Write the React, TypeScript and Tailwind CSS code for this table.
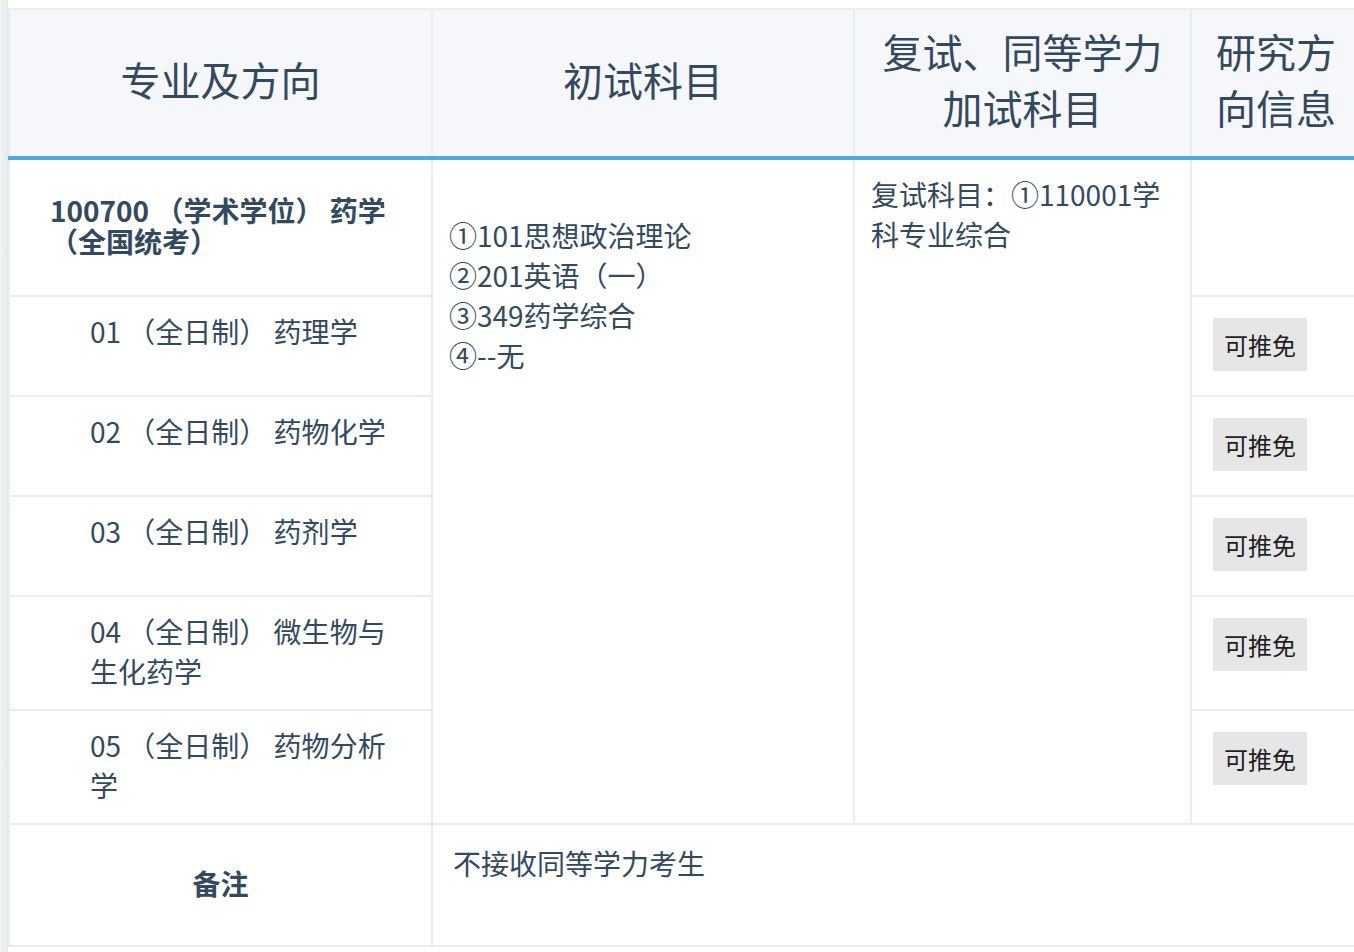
import React from "react";

const font = { fontFamily: '"Noto Sans CJK SC", "Noto Sans", sans-serif' };

const rows = [
  { text: ["01 （全日制） 药理学"], h: "h-[100px]" },
  { text: ["02 （全日制） 药物化学"], h: "h-[100px]" },
  { text: ["03 （全日制） 药剂学"], h: "h-[100px]" },
  { text: ["04 （全日制） 微生物与", "生化药学"], h: "h-[114px]" },
  { text: ["05 （全日制） 药物分析", "学"], h: "h-[114px]" },
];

function Tag() {
  return (
    <span className="inline-block bg-[#e6e6e6] px-[11px] text-[24px] leading-[53px] text-[#1f1f1f]">
      可推免
    </span>
  );
}

export default function App() {
  const th =
    "border-2 border-[#e7edf2] border-b-4 border-b-[#4fa8e4] bg-[#f5f7fb] px-4 pb-2 text-center align-middle text-[40px] font-normal leading-[56px] text-[#34495e]";
  const td = "border-2 border-[#e7edf2]";
  return (
    <div className="flex min-h-screen bg-white text-[#34495e]" style={font}>
      <div className="w-2 shrink-0 bg-linear-to-r from-[#f3f5f7] to-[#e5e9ed]" />
      <div className="min-w-0 flex-1 overflow-hidden pt-[8px]">
        <table className="w-[1352px] table-fixed border-collapse">
          <colgroup>
            <col className="w-[423px]" />
            <col className="w-[422px]" />
            <col className="w-[337px]" />
            <col className="w-[170px]" />
          </colgroup>
          <thead>
            <tr className="h-[149px]">
              <th className={th}>专业及方向</th>
              <th className={th}>初试科目</th>
              <th className={th}>复试、同等学力加试科目</th>
              <th className={th}>研究方向信息</th>
            </tr>
          </thead>
          <tbody className="text-[28px] leading-[40px]">
            <tr className="h-[138px]">
              <td className={`${td} pb-[4px] pl-[40px] pr-[28px] align-middle text-[28px] font-bold leading-[31px]`}>
                100700 （学术学位） 药学（全国统考）
              </td>
              <td rowSpan={6} className={`${td} px-4 pt-[55px] align-top`}>
                ①101思想政治理论
                <br />
                ②201英语（一）
                <br />
                ③349药学综合
                <br />
                ④--无
              </td>
              <td rowSpan={6} className={`${td} px-4 pt-[14px] align-top`}>
                复试科目：①110001学
                <br />
                科专业综合
              </td>
              <td className={td}></td>
            </tr>
            {rows.map((r, i) => (
              <tr key={i} className={r.h}>
                <td className={`${td} pl-[80px] pr-[20px] pt-[14px] align-top`}>
                  {r.text.map((t, j) => (
                    <React.Fragment key={j}>
                      {j > 0 && <br />}
                      {t}
                    </React.Fragment>
                  ))}
                </td>
                <td className={`${td} pl-[21px] pt-[21px] align-top`}>
                  <Tag />
                </td>
              </tr>
            ))}
            <tr className="h-[122px]">
              <td className={`${td} pb-[4px] text-center align-middle font-bold`}>备注</td>
              <td colSpan={3} className={`${td} px-5 pt-[18px] align-top`}>
                不接收同等学力考生
              </td>
            </tr>
          </tbody>
        </table>
      </div>
    </div>
  );
}
